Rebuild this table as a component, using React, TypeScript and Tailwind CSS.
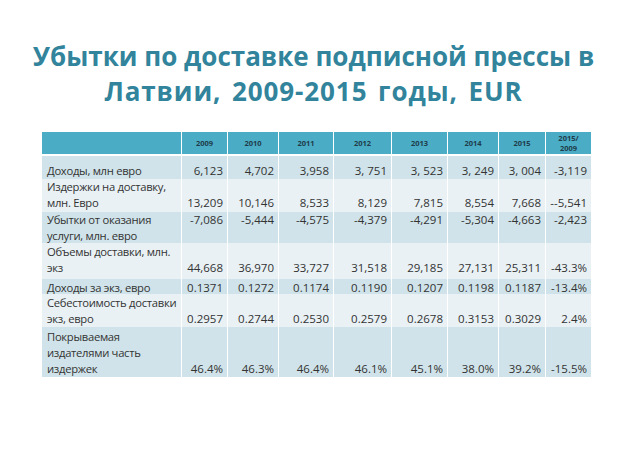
import React from 'react';

interface Row {
  label: string[];
  vals: string[];
  h: string;
  lp: string;
  vp: string;
  dark: boolean;
}

const years = ['2009', '2010', '2011', '2012', '2013', '2014', '2015'];

const rows: Row[] = [
  {
    label: ['Доходы, млн евро'],
    vals: ['6,123', '4,702', '3,958', '3, 751', '3, 523', '3, 249', '3, 004', '-3,119'],
    h: 'h-[23px]', lp: 'pt-[7px]', vp: 'pt-[7px]', dark: true,
  },
  {
    label: ['Издержки на доставку,', 'млн. Евро'],
    vals: ['13,209', '10,146', '8,533', '8,129', '7,815', '8,554', '7,668', '--5,541'],
    h: 'h-[33px]', lp: 'pt-0', vp: 'pt-[16px]', dark: false,
  },
  {
    label: ['Убытки от оказания', 'услуги, млн. евро'],
    vals: ['-7,086', '-5,444', '-4,575', '-4,379', '-4,291', '-5,304', '-4,663', '-2,423'],
    h: 'h-[31px]', lp: 'pt-0', vp: 'pt-0', dark: true,
  },
  {
    label: ['Объемы доставки, млн.', 'экз'],
    vals: ['44,668', '36,970', '33,727', '31,518', '29,185', '27,131', '25,311', '-43.3%'],
    h: 'h-[36px]', lp: 'pt-[1px]', vp: 'pt-[17px]', dark: false,
  },
  {
    label: ['Доходы за экз, евро'],
    vals: ['0.1371', '0.1272', '0.1174', '0.1190', '0.1207', '0.1198', '0.1187', '-13.4%'],
    h: 'h-[15px]', lp: 'pt-[1px]', vp: 'pt-[1px]', dark: true,
  },
  {
    label: ['Себестоимость доставки', 'экз, евро'],
    vals: ['0.2957', '0.2744', '0.2530', '0.2579', '0.2678', '0.3153', '0.3029', '2.4%'],
    h: 'h-[33px]', lp: 'pt-[1px]', vp: 'pt-[17px]', dark: false,
  },
  {
    label: ['Покрываемая', 'издателями часть', 'издержек'],
    vals: ['46.4%', '46.3%', '46.4%', '46.1%', '45.1%', '38.0%', '39.2%', '-15.5%'],
    h: 'h-[50px]', lp: 'pt-[2px]', vp: 'pt-[34px]', dark: true,
  },
];

const cols = 'grid grid-cols-[139px_46px_51px_55px_58px_56px_51px_47px_46px]';

export default function App() {
  return (
    <div
      className="w-[627px] h-[470px] bg-white flex flex-col pt-[39px]"
      style={{ fontFamily: '"Open Sans", "Noto Sans", sans-serif' }}
    >
      <h1 className="text-center text-[26px] leading-[35px] font-bold text-[#31849b]">
        Убытки по доставке подписной прессы в
        <br />
        <span className="tracking-[0.9px] [word-spacing:3px]">Латвии, 2009-2015 годы, EUR</span>
      </h1>

      <div className="ml-[42px] mt-[23px] w-[549px] text-[#333] text-[11.5px] leading-[16px]">
        {/* header */}
        <div className={`${cols} h-[22px] bg-[#4bacc6] border-b-2 border-white box-content`}>
          <div />
          {years.map((y) => (
            <div
              key={y}
              className="border-l border-white flex items-center justify-center text-[7.5px] font-bold text-[#1e3d4a]"
            >
              {y}
            </div>
          ))}
          <div className="border-l border-white flex flex-col items-center justify-center text-[7.5px] leading-[10px] font-bold text-[#1e3d4a]">
            <span>2015/</span>
            <span>2009</span>
          </div>
        </div>

        {/* body */}
        {rows.map((r, i) => (
          <div key={i} className={`${cols} ${r.h} ${r.dark ? 'bg-[#d0e3ea]' : 'bg-[#e9f1f5]'}`}>
            <div className={`pl-[5px] whitespace-nowrap text-[11.25px] tracking-[-0.3px] ${r.lp}`}>
              {r.label.map((l) => (
                <div key={l}>{l}</div>
              ))}
            </div>
            {r.vals.map((v, j) => (
              <div key={j} className={`border-l border-white text-right pr-[4px] whitespace-nowrap ${r.vp}`}>
                {v}
              </div>
            ))}
          </div>
        ))}
      </div>
    </div>
  );
}
